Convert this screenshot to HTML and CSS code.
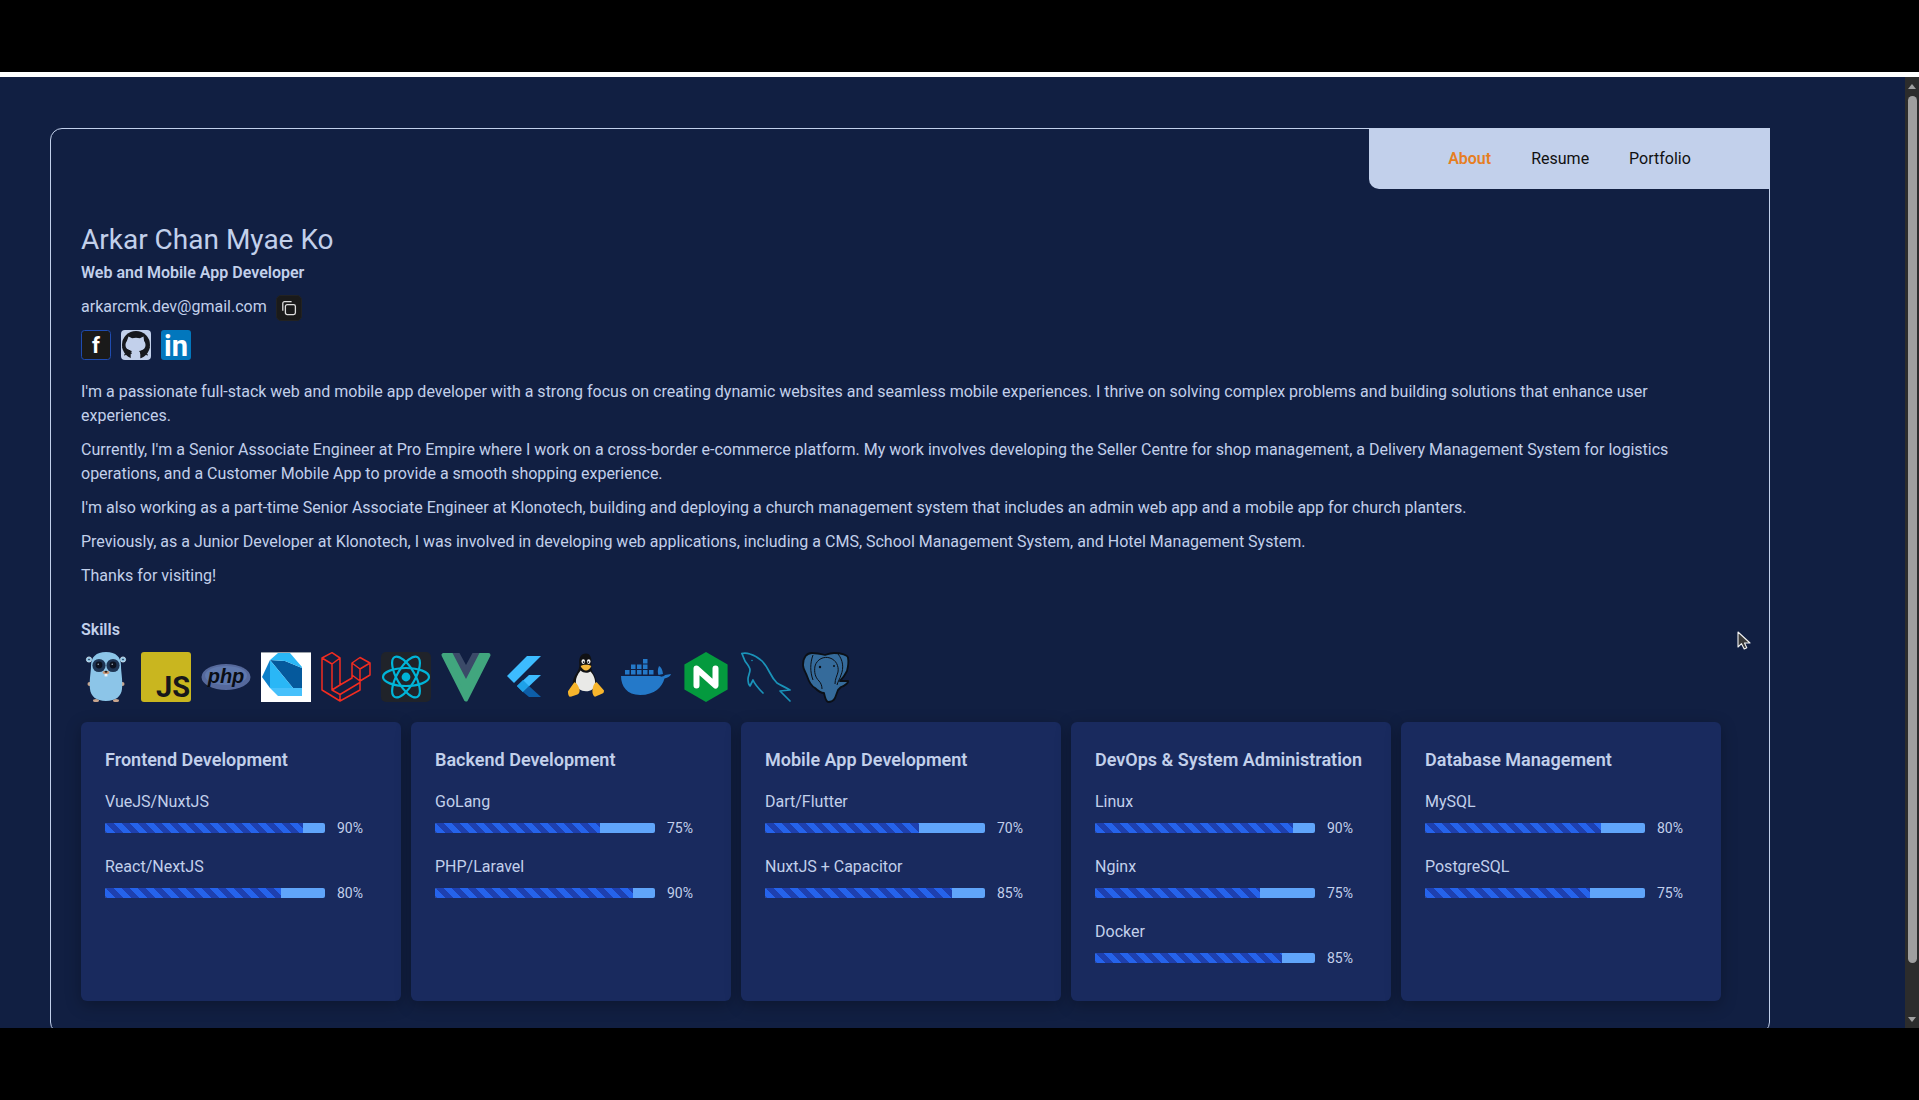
FILE: index.html
```html
<!DOCTYPE html>
<html lang="en">
<head>
<meta charset="utf-8">
<title>Arkar Chan Myae Ko</title>
<link rel="stylesheet" href="styles.css">
</head>
<body>
<div class="band"></div>
<div class="screen">
  <main class="main">
    <section class="frame">
      <nav class="nav">
        <a class="nav-link active">About</a>
        <a class="nav-link">Resume</a>
        <a class="nav-link">Portfolio</a>
      </nav>
      <h1 class="name">Arkar Chan Myae Ko</h1>
      <p class="role">Web and Mobile App Developer</p>
      <div class="email-row">
        <span class="email">arkarcmk.dev@gmail.com</span>
        <button class="copy" aria-label="Copy email">
          <svg width="16" height="16" viewBox="0 0 16 16" fill="none" stroke="#dedede" stroke-width="1.300"><rect x="4.400" y="4.600" width="10" height="10" rx="1.800"/><path d="M1.800 10.800V3.400A1.800 1.800 0 0 1 3.600 1.600h7"/></svg>
        </button>
      </div>
      <div class="socials">
        <svg class="social" viewBox="0 0 30 30"><rect x=".5" y=".5" width="29" height="29" rx="3" fill="#1a1a1a" stroke="#1f4bb0"/><text x="15" y="23" class="glyph-f">f</text></svg>
        <svg class="social" viewBox="0 0 30 30"><rect width="30" height="30" rx="4" fill="#c2d0eb"/><circle cx="15" cy="15" r="14" fill="#16181d"/><path d="M7.500 6.500l3.600 1.800a12 12 0 0 1 7.800 0l3.600-1.800.6 4.500c1 1.300 1.400 2.700 1.400 4 0 3.500-2.500 5.500-6.500 6 1 .8 1.300 2 1.300 3.300V29h-9.600v-4.700c0-1.300.3-2.500 1.300-3.300-4-.5-6.500-2.500-6.500-6 0-1.300.4-2.700 1.400-4z" fill="#c2d0eb"/><path d="M1.500 17.500l8 3.500M28.500 17.500l-8 3.500M3 25l8-2M27 25l-8-2" stroke="#16181d" stroke-width="1" fill="none"/></svg>
        <svg class="social" viewBox="0 0 30 30"><rect width="30" height="30" rx="3" fill="#0277bd"/><text x="3" y="26" class="glyph-in">in</text></svg>
      </div>
      <div class="about">
        <p>I'm a passionate full-stack web and mobile app developer with a strong focus on creating dynamic websites and seamless mobile experiences. I thrive on solving complex problems and building solutions that enhance user experiences.</p>
        <p>Currently, I'm a Senior Associate Engineer at Pro Empire where I work on a cross-border e-commerce platform. My work involves developing the Seller Centre for shop management, a Delivery Management System for logistics operations, and a Customer Mobile App to provide a smooth shopping experience.</p>
        <p>I'm also working as a part-time Senior Associate Engineer at Klonotech, building and deploying a church management system that includes an admin web app and a mobile app for church planters.</p>
        <p>Previously, as a Junior Developer at Klonotech, I was involved in developing web applications, including a CMS, School Management System, and Hotel Management System.</p>
        <p>Thanks for visiting!</p>
      </div>
      <h2 class="skills-title">Skills</h2>
      <div class="icons">
        <svg class="icon" viewBox="0 0 50 50"><circle cx="8" cy="7.500" r="2.600" fill="#8cc5e8" stroke="#d5e4ee" stroke-width=".8"/><circle cx="42" cy="7.500" r="2.600" fill="#8cc5e8" stroke="#d5e4ee" stroke-width=".8"/><circle cx="8" cy="7.500" r=".8" fill="#1b2a44"/><circle cx="42" cy="7.500" r=".8" fill="#1b2a44"/><ellipse cx="8.500" cy="32" rx="2" ry="2" fill="#c9a58c"/><ellipse cx="41.500" cy="32" rx="2" ry="2" fill="#c9a58c"/><ellipse cx="15" cy="48.500" rx="3" ry="1.500" fill="#c9a58c"/><ellipse cx="35" cy="48.500" rx="3" ry="1.500" fill="#c9a58c"/><path d="M25 0c10 0 15 5 15 14 0 6 2 15 1 23-.6 7-6 12-16 12S9.600 44 9 37c-1-8 1-17 1-23C10 5 15 0 25 0z" fill="#8cc5e8"/><circle cx="18" cy="13.500" r="6.600" fill="#1e3554"/><circle cx="32" cy="13.500" r="6.600" fill="#1e3554"/><circle cx="18" cy="13" r="3.400" fill="#0c1220"/><circle cx="32" cy="13" r="3.400" fill="#0c1220"/><circle cx="17.200" cy="12.200" r=".7" fill="#b7c7d4"/><circle cx="31.200" cy="12.200" r=".7" fill="#b7c7d4"/><ellipse cx="25" cy="20.500" rx="3.400" ry="1.800" fill="#c9997a"/><ellipse cx="25" cy="19.800" rx="1.500" ry="1" fill="#2a2019"/><rect x="23.600" y="22" width="2.800" height="2.400" fill="#eaf2f7"/></svg>
        <svg class="icon" viewBox="0 0 50 50"><rect width="50" height="50" rx="3" fill="#c9b61f"/><text x="15" y="45" class="glyph-js">JS</text></svg>
        <svg class="icon" viewBox="0 0 50 50"><ellipse cx="25" cy="25" rx="24.500" ry="13" fill="#56699c"/><ellipse cx="25" cy="23.500" rx="21" ry="9.500" fill="#5f78ad"/><text x="25" y="31" class="glyph-php">php</text></svg>
        <svg class="icon" viewBox="0 0 50 50"><rect width="50" height="50" fill="#fff"/><rect width="50" height="1" fill="#9aa0a8"/><path d="M9 8L1 25l8 11z" fill="#0d7fc9"/><path d="M9 8L32 36h9V16L24 9z" fill="#05599c"/><path d="M9 8l8-7h12l12 14v1L24 9z" fill="#2ab7f6"/><path d="M9 8v28h23z" fill="#2ab7f6"/><path d="M9 36h32v8H17z" fill="#46c0fb"/></svg>
        <svg class="icon" viewBox="0 0 50 50" fill="none" stroke="#f22c20" stroke-width="1.500" stroke-linejoin="round"><path d="M1 6l10-5.300L19 6v27l12-7V11l8-5.500L49 11v12l-10 6v9L19 49 1 38zM1 6l10 6 8-6M11 12v26l8 4.500 20-12M1 38l10 6M11 38l8-5M31 11l8 6 10-6M39 17v12M31 23l8 6M19 42.500V49"/></svg>
        <svg class="icon" viewBox="0 0 50 50"><rect width="50" height="50" rx="5" fill="#20232a"/><g fill="none" stroke="#00b4d8" stroke-width="2.200"><ellipse cx="25" cy="25" rx="23" ry="9"/><ellipse cx="25" cy="25" rx="23" ry="9" transform="rotate(60 25 25)"/><ellipse cx="25" cy="25" rx="23" ry="9" transform="rotate(120 25 25)"/></g><circle cx="25" cy="25" r="4.400" fill="#00b4d8"/></svg>
        <svg class="icon" viewBox="0 0 50 50"><path d="M2.500 3h9L25 26 38.500 3h9L25 47.500z" fill="#41a67e" stroke="#41a67e" stroke-width="4" stroke-linejoin="round"/><path d="M11.500 1h7L25 13l6.500-12h7L25 27z" fill="#3b4a68"/></svg>
        <svg class="icon" viewBox="0 0 50 50"><path d="M6 24L26 4h14L13 31z" fill="#3dbcff"/><path d="M16 34l12-11h12L22 40z" fill="#3dbcff"/><path d="M16 34l6-6 6 6-6 6z" fill="#1ea1e8"/><path d="M22 40l6-6 12 11H28z" fill="#0d5ea8"/></svg>
        <svg class="icon" viewBox="0 0 50 50"><g transform="translate(2.500 1.500) scale(.9)"><path d="M25 0c-6 0-8 5-7.500 11 .3 4-.5 7-3 11-3 4-5 9-4 16l25 1c2-6 1-12-3-18-2-3-1.500-7-1.500-10C31.500 5 30 0 25 0z" fill="#101114"/><path d="M19 19c-3 4-6 9-5 15 1 5 5 8 11 8s9-3 10-7c1-6-2-12-5-15-3 2-8 2-11-1z" fill="#e9e9e7"/><ellipse cx="22" cy="9" rx="2" ry="2.600" fill="#f2f2f2"/><ellipse cx="28" cy="9" rx="2" ry="2.600" fill="#f2f2f2"/><circle cx="22.400" cy="9.500" r="1" fill="#101114"/><circle cx="27.600" cy="9.500" r="1" fill="#101114"/><path d="M19 14c3-2 9-2 12 0-1 3-4 5-6 5s-5-2-6-5z" fill="#f4b73a"/><path d="M5 42l7-10c2 0 4 3 5.500 7 1 3 0 6-2 6.500L8 48c-2 0-3-1.500-3-6z" fill="#f7b52c"/><path d="M45 41l-8-9c-2 0-4 3-4.500 7-1 4 0 8 2.500 9l7-3c2-1 3-1 3-4z" fill="#f7b52c"/></g></svg>
        <svg class="icon" viewBox="0 0 50 50" fill="#2479c9"><path d="M0 24h38c1 0 2 .8 3 .6 1.600-.2 2.500-1 3-1.600l6-1c-.5 2-3 4-6.500 4.500C41 35 34 43 19 43 6 43 0 34 0 24z"/><path d="M37.500 23c-1-2-1-6 .5-9 2 1 3.500 3.500 4 8z"/><path d="M4 18h4.500v4.500H4zM10 18h4.500v4.500H10zM16 18h4.500v4.500H16zM22 18h4.500v4.500H22zM28 18h4.500v4.500H28zM10 12.500h4.500V17H10zM16 12.500h4.500V17H16zM22 12.500h4.500V17H22zM22 7h4.500v4.500H22z"/></svg>
        <svg class="icon" viewBox="0 0 50 50"><path d="M25 0l21.600 12.500v25L25 50 3.400 37.500v-25z" fill="#049a3e"/><path d="M15.500 33.500v-17L34.500 33.500v-17" fill="none" stroke="#fff" stroke-width="6" stroke-linecap="round" stroke-linejoin="round"/></svg>
        <svg class="icon" viewBox="0 0 50 50" fill="none" stroke="#1a93b9" stroke-width="1.700" stroke-linejoin="round" stroke-linecap="round"><path d="M1 1.500c3-1 5-.5 8 .5 5 1.500 9 4 12 7 4 4 6 8 8 12 2 4 4 7 7 10 3 2 8 4 13 7l-10 1 10 10"/><path d="M1 1.500c1 3 2 5 3 7.500 2 3 5 6 5 9 0 3-2 6-2 9 0 3 1 6 2 7l3-6c2 5 6 9 10 13"/><circle cx="11" cy="8.500" r=".8" fill="#1a93b9" stroke="none"/></svg>
        <svg class="icon" viewBox="0 0 50 50"><path d="M2 13C2 5 6 1 11 1c5 0 9 1 13 2 3-1 6-2 9-2 7 0 14 2 14 5 1 5 0 9-1 13-2 4-4 7-7 10h8c1 1-3 5-7 6l-3 3-3 8c-1 2-4 4-7 4-2-1-3-4-4-9-3 0-6-2-9-5-4-2-6-6-8-12-1-3-4-7-4-11z" fill="#356b9b" stroke="#0b0f16" stroke-width="1.800" stroke-linejoin="round"/><path d="M12 3c-3 8-3 17 0 25M37 2c5 6 6 14 3 21-1 4-3 6-4 10M14 14c2-7 9-10 15-8 6 2 9 8 8 14-1 4-3 7-3 12M14 14c-1 6 0 11 4 15 2 2 3 5 3 8" fill="none" stroke="#0b0f16" stroke-width="1"/><circle cx="19" cy="15" r="1.200" fill="#0b0f16"/><circle cx="33" cy="14" r="1" fill="#0b0f16"/></svg>
      </div>
      <div class="cards">
        <article class="card">
          <h3 class="card-title">Frontend Development</h3>
          <div class="skill"><div class="skill-name">VueJS/NuxtJS</div><div class="bar-row"><div class="bar"><div class="bar-fill" style="width:90%"></div></div><span class="pct">90%</span></div></div>
          <div class="skill"><div class="skill-name">React/NextJS</div><div class="bar-row"><div class="bar"><div class="bar-fill" style="width:80%"></div></div><span class="pct">80%</span></div></div>
        </article>
        <article class="card">
          <h3 class="card-title">Backend Development</h3>
          <div class="skill"><div class="skill-name">GoLang</div><div class="bar-row"><div class="bar"><div class="bar-fill" style="width:75%"></div></div><span class="pct">75%</span></div></div>
          <div class="skill"><div class="skill-name">PHP/Laravel</div><div class="bar-row"><div class="bar"><div class="bar-fill" style="width:90%"></div></div><span class="pct">90%</span></div></div>
        </article>
        <article class="card">
          <h3 class="card-title">Mobile App Development</h3>
          <div class="skill"><div class="skill-name">Dart/Flutter</div><div class="bar-row"><div class="bar"><div class="bar-fill" style="width:70%"></div></div><span class="pct">70%</span></div></div>
          <div class="skill"><div class="skill-name">NuxtJS + Capacitor</div><div class="bar-row"><div class="bar"><div class="bar-fill" style="width:85%"></div></div><span class="pct">85%</span></div></div>
        </article>
        <article class="card">
          <h3 class="card-title">DevOps &amp; System Administration</h3>
          <div class="skill"><div class="skill-name">Linux</div><div class="bar-row"><div class="bar"><div class="bar-fill" style="width:90%"></div></div><span class="pct">90%</span></div></div>
          <div class="skill"><div class="skill-name">Nginx</div><div class="bar-row"><div class="bar"><div class="bar-fill" style="width:75%"></div></div><span class="pct">75%</span></div></div>
          <div class="skill"><div class="skill-name">Docker</div><div class="bar-row"><div class="bar"><div class="bar-fill" style="width:85%"></div></div><span class="pct">85%</span></div></div>
        </article>
        <article class="card">
          <h3 class="card-title">Database Management</h3>
          <div class="skill"><div class="skill-name">MySQL</div><div class="bar-row"><div class="bar"><div class="bar-fill" style="width:80%"></div></div><span class="pct">80%</span></div></div>
          <div class="skill"><div class="skill-name">PostgreSQL</div><div class="bar-row"><div class="bar"><div class="bar-fill" style="width:75%"></div></div><span class="pct">75%</span></div></div>
        </article>
      </div>
    </section>
    <svg class="cursor" width="14" height="20" viewBox="0 0 14 20"><path d="M1 1v15l3.500-3.300L7.200 18l2.600-1.300L7.500 12H13z" fill="#3a3a3a" stroke="#f2f2f2" stroke-width="1.100" stroke-linejoin="round"/></svg>
  </main>
  <aside class="scrollbar">
    <span class="arrow-up"></span>
    <span class="thumb"></span>
    <span class="arrow-down"></span>
  </aside>
</div>
<div class="band"></div>
</body>
</html>
```
FILE: styles.css
```css
* { box-sizing: border-box; }

html, body {
  margin: 0;
  height: 1100px;
  overflow: hidden;
  background: #000;
}

body {
  font-family: Roboto, "Liberation Sans", sans-serif;
  font-size: 16px;
  line-height: 24px;
  color: #c2d0eb;
}

.band { height: 72px; background: #000; }

.screen {
  display: flex;
  height: 956px;
  border-top: 5px solid #fff;
  background: #111f42;
  overflow: hidden;
}

.main {
  position: relative;
  flex: 1;
  min-width: 0;
  padding: 51px 135px 0 50px;
}

.frame {
  position: relative;
  height: 906px;
  padding: 93px 48px 32px 30px;
  border: 1px solid #c2d0eb;
  border-radius: 12px;
}

.nav {
  position: absolute;
  top: -1px;
  right: -1px;
  display: flex;
  justify-content: center;
  align-items: center;
  gap: 40px;
  width: 401px;
  height: 61px;
  background: #c2d0eb;
  border-bottom-left-radius: 10px;
  color: #111;
}

.nav-link.active { color: #e67e22; font-weight: 600; }

.name {
  margin: 0;
  font-size: 28px;
  font-weight: 400;
  line-height: 36px;
}

.role {
  margin: 3px 0 0;
  font-weight: 600;
}

.email-row {
  display: flex;
  align-items: center;
  gap: 9px;
  height: 26px;
  margin-top: 10px;
}

.email { margin-top: -2px; }

.copy {
  display: flex;
  align-items: center;
  justify-content: center;
  width: 26px;
  height: 26px;
  padding: 0;
  border: 1px solid #222;
  border-radius: 5px;
  background: #1a1a1a;
}

.socials {
  display: flex;
  gap: 10px;
  margin-top: 9px;
}

.social { display: block; width: 30px; height: 30px; overflow: visible; }

.glyph-f { font: 700 22px Roboto, sans-serif; fill: #fff; text-anchor: middle; }
.glyph-in { font: 700 29px Roboto, sans-serif; fill: #fff; }
.glyph-js { font: 700 29px Roboto, sans-serif; fill: #17171a; }
.glyph-php { font: italic 700 20px "Liberation Sans", sans-serif; fill: #0a0d14; text-anchor: middle; }

.about { margin-top: 20px; }
.about p { margin: 0 0 10px; }
.about p:last-child { margin-bottom: 0; }

.skills-title {
  margin: 30px 0 0;
  font-size: 16px;
  font-weight: 600;
  line-height: 24px;
}

.icons {
  display: flex;
  gap: 10px;
  margin-top: 10px;
}

.icon { display: block; flex: none; width: 50px; height: 50px; overflow: visible; }

.cards {
  display: grid;
  grid-template-columns: repeat(5, 320px);
  gap: 10px;
  margin-top: 20px;
}

.card {
  height: 279px;
  padding: 24px;
  border-radius: 6px;
  background: #192a5e;
  box-shadow: 0 4px 16px rgba(0, 0, 0, .28);
}

.card-title {
  margin: 0 0 16px;
  font-size: 18px;
  font-weight: 600;
  line-height: 28px;
}

.skill { margin-bottom: 17px; }

.bar-row {
  display: flex;
  align-items: center;
  gap: 12px;
  height: 20px;
  margin-top: 4px;
}

.bar {
  width: 220px;
  height: 10px;
  border-radius: 2px;
  background: #60a5fa;
  overflow: hidden;
}

.bar-fill {
  height: 100%;
  background-image: linear-gradient(45deg, #1e40af 25%, #2563eb 25%, #2563eb 50%, #1e40af 50%, #1e40af 75%, #2563eb 75%);
  background-size: 16px 16px;
}

.pct { font-size: 14px; line-height: 20px; }

.cursor {
  position: absolute;
  left: 1737px;
  top: 554px;
}

.scrollbar {
  position: relative;
  flex: none;
  width: 14px;
  background: #2c2c2c;
}

.thumb {
  position: absolute;
  top: 19px;
  left: 3px;
  width: 9px;
  height: 867px;
  border-radius: 5px;
  background: #9f9f9f;
}

.arrow-up, .arrow-down {
  position: absolute;
  left: 3px;
  width: 0;
  height: 0;
  border-left: 4.500px solid transparent;
  border-right: 4.500px solid transparent;
}

.arrow-up { top: 7px; border-bottom: 5px solid #9f9f9f; }
.arrow-down { top: 940px; border-top: 5px solid #9f9f9f; }
```
